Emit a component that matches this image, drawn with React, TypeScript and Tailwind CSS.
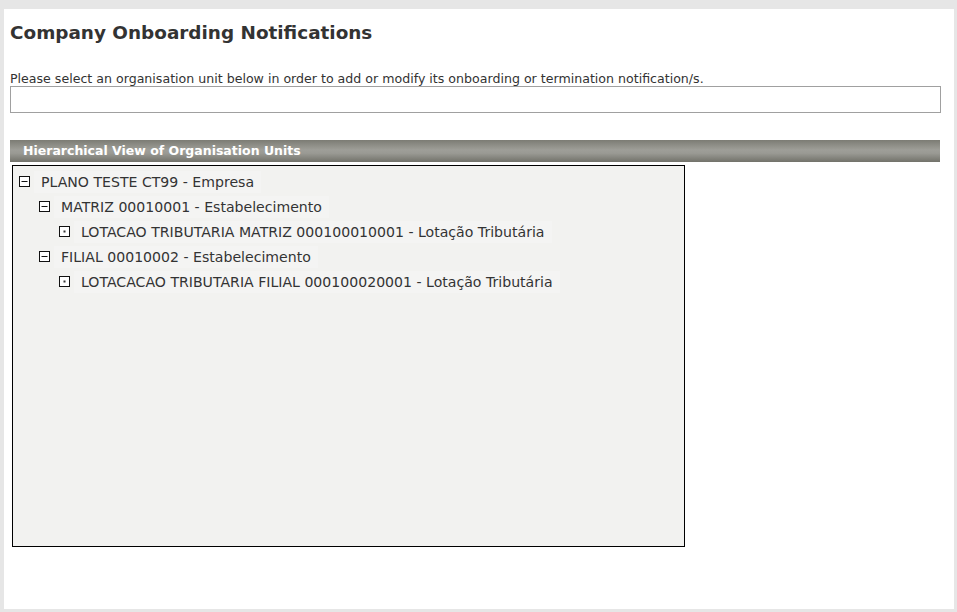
import React from 'react'

type Node = {
  label: string
  level: number
  leaf?: boolean
}

const nodes: Node[] = [
  { label: 'PLANO TESTE CT99 - Empresa', level: 0 },
  { label: 'MATRIZ 00010001 - Estabelecimento', level: 1 },
  { label: 'LOTACAO TRIBUTARIA MATRIZ 000100010001 - Lotação Tributária', level: 2, leaf: true },
  { label: 'FILIAL 00010002 - Estabelecimento', level: 1 },
  { label: 'LOTACACAO TRIBUTARIA FILIAL 000100020001 - Lotação Tributária', level: 2, leaf: true },
]

function ToggleIcon({ leaf }: { leaf?: boolean }) {
  return (
    <svg width="11" height="11" viewBox="0 0 11 11" className="shrink-0">
      <rect x="0.5" y="0.5" width="10" height="10" fill="#fff" stroke="#111" />
      {leaf ? <rect x="4.5" y="4.5" width="2" height="2" fill="#333" /> : <rect x="2.5" y="5" width="6" height="1" fill="#111" />}
    </svg>
  )
}

export default function App() {
  return (
    <div className="h-[612px] w-[957px] bg-[#e6e6e6] pl-[4px] pt-[9px] pr-[3px] pb-[3px] font-['DejaVu_Sans',sans-serif] text-[#333]">
      <div className="h-[600px] w-[950px] bg-white px-[6px] pt-[12px]">
        <h1 className="text-[18.4px] font-bold leading-[23px] text-[#333]">Company Onboarding Notifications</h1>
        <p className="mt-[28px] text-[12.6px] leading-[14px] tracking-[0px]">
          Please select an organisation unit below in order to add or modify its onboarding or termination notification/s.
        </p>
        <div className="h-[27px] w-[931px] border border-[#a0a0a0] bg-white" />
        <div className="mt-[27px] flex h-[22px] w-[930px] items-center bg-[linear-gradient(to_bottom,#7c7c74_0%,#9e9e98_45%,#9a9a94_60%,#72726a_100%)] pl-[13px] text-[12.5px] font-bold text-white">
          Hierarchical View of Organisation Units
        </div>
        <div className="ml-[2px] mt-[3px] h-[382px] w-[673px] border border-black bg-[#f2f2f0] pt-[3px]">
          {nodes.map(n => (
            <div key={n.label} className="flex h-[25px] items-center" style={{ paddingLeft: 6 + n.level * 20 }}>
              <ToggleIcon leaf={n.leaf} />
              <span className="ml-[4px] bg-[#f4f4f3] px-[7px] text-[14.1px] leading-[22px] text-[#333]">{n.label}</span>
            </div>
          ))}
        </div>
      </div>
    </div>
  )
}
